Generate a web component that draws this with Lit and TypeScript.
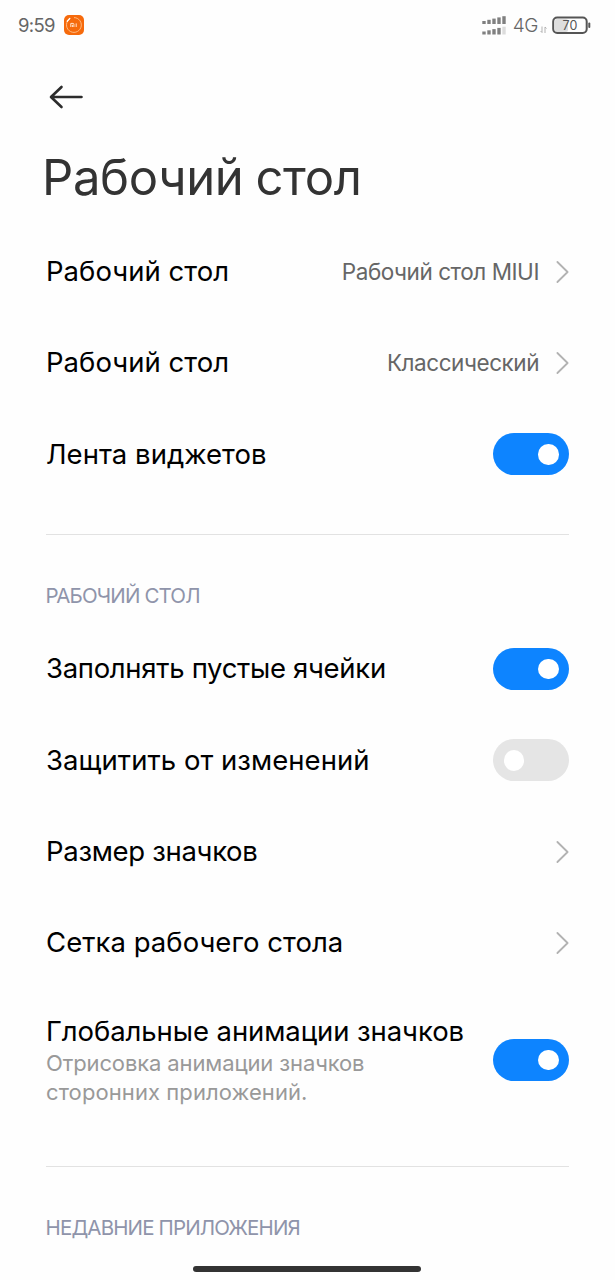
import { LitElement, html, css, svg } from "lit";
import { classMap } from "lit/directives/class-map.js";

type Row = {
  title: string;
  value?: string;
  summary?: string[];
  on?: boolean;
  kind: "link" | "toggle";
  snug?: boolean;
};

const general: Row[] = [
  { title: "Рабочий стол", value: "Рабочий стол MIUI", kind: "link" },
  { title: "Рабочий стол", value: "Классический", kind: "link" },
  { title: "Лента виджетов", kind: "toggle", on: true },
];

const desktop: Row[] = [
  { title: "Заполнять пустые ячейки", kind: "toggle", on: true, snug: true },
  { title: "Защитить от изменений", kind: "toggle", on: false },
  { title: "Размер значков", kind: "link", snug: true },
  { title: "Сетка рабочего стола", kind: "link" },
  {
    title: "Глобальные анимации значков",
    summary: ["Отрисовка анимации значков", "сторонних приложений."],
    kind: "toggle",
    on: true,
  },
];

class SettingsRow extends LitElement {
  static properties = { row: { attribute: false } };
  declare row: Row;

  static styles = css`
    :host { display: block; }
    .row {
      display: flex;
      align-items: center;
      height: 91.2px;
    }
    .tall { height: 143.5px; }
    .text { flex: 1; white-space: nowrap; padding-bottom: 1.6px; }
    .tall .text { padding-bottom: 1px; }
    .title { font-size: 27.5px; line-height: 36px; color: #000; letter-spacing: 0.04px; }
    .tall .title { letter-spacing: -0.08px; }
    .snug .title { letter-spacing: -0.31px; }
    .summary {
      font-size: 22px;
      line-height: 28.5px;
      color: #999;
      letter-spacing: -0.12px;
    }
    .summary + .summary { letter-spacing: 0.08px; }
    .value {
      font-size: 22.5px;
      letter-spacing: -0.45px;
      color: #666;
      margin-right: 16px;
      padding-bottom: 2px;
      white-space: nowrap;
    }
    .chevron { display: block; width: 14px; height: 24px; }
    .toggle {
      box-sizing: border-box;
      width: 76px;
      height: 42px;
      border-radius: 21px;
      padding: 0 10.5px;
      display: flex;
      align-items: center;
      background: #e5e5e5;
    }
    .toggle.on { background: #0d84ff; justify-content: flex-end; }
    .knob { width: 20.5px; height: 20.5px; border-radius: 50%; background: #fff; }
  `;

  render() {
    const r = this.row;
    return html`
      <div class=${classMap({ row: true, tall: !!r.summary, snug: !!r.snug })}>
        <div class="text">
          <div class="title">${r.title}</div>
          ${r.summary?.map((s) => html`<div class="summary">${s}</div>`)}
        </div>
        ${r.value ? html`<div class="value">${r.value}</div>` : null}
        ${r.kind === "toggle"
          ? html`<div class=${classMap({ toggle: true, on: !!r.on })}><div class="knob"></div></div>`
          : html`<svg class="chevron" viewBox="0 0 14 24">
              <path d="M2.4 2 L12.6 12 L2.4 22" fill="none" stroke="#b2b2b2" stroke-width="1.8" stroke-linecap="round" stroke-linejoin="round" />
            </svg>`}
      </div>
    `;
  }
}
customElements.define("settings-row", SettingsRow);

class AppRoot extends LitElement {
  static styles = css`
    :host {
      display: flex;
      flex-direction: column;
      box-sizing: border-box;
      height: 1280px;
      overflow: hidden;
      background: #fefefe;
      font-family: Inter, Roboto, sans-serif;
    }
    .status {
      display: flex;
      align-items: center;
      height: 50px;
      padding: 0 24px 0 18px;
      color: #666;
    }
    .time { font-size: 18.5px; letter-spacing: -0.65px; width: 45.5px; }
    .app { display: block; width: 20px; height: 20px; }
    .fill { flex: 1; }
    .signal { display: block; width: 24px; height: 19px; margin-right: 7px; }
    .net { font-size: 19px; font-weight: 300; letter-spacing: -0.4px; }
    .arrows { display: block; width: 8px; height: 8px; margin: 9px 4px 0 2px; }
    .battery { display: block; width: 39px; height: 19px; }
    .nav { display: flex; height: 92px; padding: 0 49px; align-items: center; }
    .back { display: block; width: 34px; height: 24px; margin-top: 1px; }
    h1 {
      margin: 0;
      padding: 0 42px;
      height: 84.5px;
      line-height: 71px;
      font-size: 49px;
      font-weight: 400;
      letter-spacing: -0.35px;
      word-spacing: -1.5px;
      color: #333;
    }
    .group { padding: 0 46px; }
    .divider { height: 1px; margin: 34px 46px 0; background: #e2e2e2; }
    .caption {
      height: 88.5px;
      padding: 0 45.5px;
      line-height: 122px;
      font-size: 20.5px;
      letter-spacing: -0.84px;
      color: #8f94aa;
    }
    .home {
      position: absolute;
      left: 193px;
      top: 1266px;
      width: 228px;
      height: 6px;
      border-radius: 3px;
      background: #333;
    }
  `;

  private bars(y: number, last: string) {
    return [0, 1, 2, 3, 4].map(
      (i) => svg`<rect x=${0.3 + i * 5} y=${y - 3 - i * 1.2} width="3.4" height=${3 + i * 1.2} fill=${i === 4 ? last : "#808080"} />`
    );
  }

  render() {
    return html`
      <div class="status">
        <span class="time">9:59</span>
        <svg class="app" viewBox="0 0 20 20">
          <rect width="20" height="20" rx="5" fill="#f66a0c" />
          <path d="M6.2 3.6 A7.4 7.4 0 1 0 10 2.6" fill="none" stroke="#ffc48f" stroke-width="0.9" />
          <path d="M3.2 6.2 L5.8 3.4" stroke="#fff" stroke-width="1.3" stroke-linecap="round" />
          <path d="M6.8 12 V8.4 H9 Q9.9 8.4 9.9 9.3 V12 M8.4 9.8 V12 M12.2 8.4 V12" fill="none" stroke="#ffe3cc" stroke-width="1" />
        </svg>
        <span class="fill"></span>
        <svg class="signal" viewBox="0 0 24 19">${this.bars(8, "#808080")}${this.bars(18.5, "#dcdcdc")}</svg>
        <span class="net">4G</span>
        <svg class="arrows" viewBox="0 0 8 8">
          <path d="M2 0.5 V6.5 L0.6 5 M5 7 V1 L6.6 2.5" fill="none" stroke="#aaa" stroke-width="0.9" />
        </svg>
        <svg class="battery" viewBox="0 0 39 19">
          <rect x="3" y="3" width="13" height="13" rx="2" fill="#dedede" />
          <rect x="1.2" y="1.5" width="33.5" height="15.5" rx="4" fill="none" stroke="#555" stroke-width="2" />
          <rect x="36.3" y="6.5" width="2" height="5.5" rx="1" fill="#555" />
          <text x="18" y="13.7" text-anchor="middle" font-size="12.5" fill="#555">70</text>
        </svg>
      </div>
      <div class="nav">
        <svg class="back" viewBox="0 0 34 24">
          <path d="M32.5 12 H2.2 M12.5 2 L2 12 L12.5 22" fill="none" stroke="#2c2c2c" stroke-width="2.6" stroke-linecap="round" stroke-linejoin="round" />
        </svg>
      </div>
      <h1>Рабочий стол</h1>
      <div class="group">${general.map((r) => html`<settings-row .row=${r}></settings-row>`)}</div>
      <div class="divider"></div>
      <div class="caption">РАБОЧИЙ СТОЛ</div>
      <div class="group">${desktop.map((r) => html`<settings-row .row=${r}></settings-row>`)}</div>
      <div class="divider"></div>
      <div class="caption">НЕДАВНИЕ ПРИЛОЖЕНИЯ</div>
      <div class="home"></div>
    `;
  }
}
customElements.define("app-root", AppRoot);
